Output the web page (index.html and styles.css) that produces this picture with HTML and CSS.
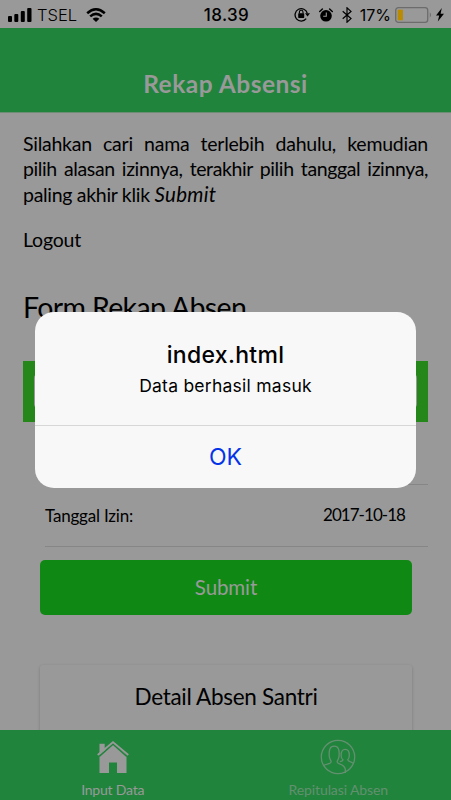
FILE: index.html
```html
<!DOCTYPE html>
<html lang="id">
<head>
<meta charset="utf-8">
<title>Rekap Absensi</title>
<link rel="stylesheet" href="styles.css">
</head>
<body>
<div class="screen">
  <div class="status">
    <div class="status-left">
      <svg class="signal" width="24" height="14" viewBox="0 0 24 14"><rect x="0" y="8" width="4" height="6" rx="1"/><rect x="6.3" y="6" width="4" height="8" rx="1"/><rect x="12.8" y="3" width="4" height="11" rx="1"/><rect x="19.2" y="0" width="4.3" height="14" rx="1"/></svg>
      <span class="carrier">TSEL</span>
      <svg class="wifi" width="20" height="14" viewBox="0 0 20 14"><path d="M1.2 5.2Q10-2.6 18.8 5.2M4.2 8.4Q10 3.4 15.8 8.4" fill="none" stroke="#000" stroke-width="2.5"/><path d="M6.6 10.8Q10 8 13.4 10.8L10 14Z"/></svg>
    </div>
    <span class="clock">18.39</span>
    <div class="status-right">
      <svg width="16" height="15" viewBox="0 0 16 15"><path d="M12.2 11.6A6.2 6.2 0 1 1 13.3 6.4" fill="none" stroke="#000" stroke-width="1.3"/><path d="M11 6.2h5l-2.4 3.2z"/><rect x="4.2" y="6.3" width="6" height="4.6" rx=".6"/><path d="M5.4 6.5V5a1.8 1.8 0 0 1 3.6 0v1.5" fill="none" stroke="#000" stroke-width="1.1"/></svg>
      <svg width="14" height="14" viewBox="0 0 14 14"><circle cx="7" cy="7.8" r="5.8"/><path d="M.7 3.6 3.4.9M13.3 3.6 10.6.9" stroke="#000" stroke-width="1.4" stroke-linecap="round"/><path d="M7.3 4.5v3.7H4.2" fill="none" stroke="#999" stroke-width="1.1"/></svg>
      <svg width="10" height="16" viewBox="0 0 10 16"><path d="M.7 4.2 9 11.6 5 15.2V.8L9 4.4.7 11.8" fill="none" stroke="#000" stroke-width="1.2"/></svg>
      <span class="percent">17%</span>
      <svg class="battery" width="37" height="16" viewBox="0 0 37 16"><rect x=".7" y=".7" width="32" height="14.6" rx="2.6" fill="none" stroke="#6c6c6c" stroke-width="1.3"/><rect x="2.7" y="2.7" width="5.2" height="10.6" fill="#ba8b00"/><path d="M34.8 5.3q2.4 2.7 0 5.4z" fill="#6c6c6c"/></svg>
      <svg width="8" height="14" viewBox="0 0 8 14"><path d="M5.8 0 0 7.6h3.2L1.8 13.5 8 5.7H4.6z"/></svg>
    </div>
  </div>
  <header class="navbar"><h1>Rekap Absensi</h1></header>
  <main class="content">
    <p class="intro"><span class="line l1">Silahkan cari nama terlebih dahulu, kemudian</span> <span class="line l2">pilih alasan izinnya, terakhir pilih tanggal izinnya,</span> <span class="l3">paling akhir klik <em>Submit</em></span></p>
    <a class="logout">Logout</a>
    <h2 class="form-title">Form Rekap Absen</h2>
    <div class="searchbar"><div class="field"></div></div>
    <div class="row reason"></div>
    <div class="row date"><span class="label">Tanggal Izin:</span><span class="value">2017-10-18</span></div>
    <button class="submit"><span>Submit</span></button>
    <section class="card"><h3>Detail Absen Santri</h3></section>
  </main>
  <nav class="tabs">
    <a class="tab active">
      <svg width="32" height="34" viewBox="0 0 32 34"><path d="M2.500 14.200V2.800h5.200v6.300L16 2l13.500 12v18H20V21.500h-8V32H2.500z"/><path d="M2.200 15.400 16 3.300l13.800 12.100" fill="none" stroke="#20843d" stroke-width="1.500"/><path d="M.7 14 16 1.200 31.300 14" fill="none" stroke="#999" stroke-width="1.700"/></svg>
      <span>Input Data</span>
    </a>
    <a class="tab">
      <svg width="36" height="36" viewBox="0 0 36 36" fill="none" stroke="#63906f" stroke-width="1.3"><circle cx="18" cy="18" r="16.7"/><path d="M3.8 26.500c2.200-1.700 6.900-1.200 7.300-3.500.3-1.500-1.700-2.400-1.900-6.400-.3-5.900.8-9.400 5-9.400s5.300 3.500 4.900 9.400c-.2 4-2.100 4.900-1.900 6.400.4 2.700 7.100 1.400 8.100 7.100l.1 4"/><path d="M19.800 22.700c1.600-.2 3-.9 3.200-2-1.300-.8-1.900-2.100-1.900-4.200 0-4 1.300-6.100 4.100-6.100s4.200 2.100 4.100 6.100c0 2.100-.6 3.400-1.600 4.200.3 2.300 3.700 1.300 5.500 3.700"/></svg>
      <span>Repitulasi Absen</span>
    </a>
  </nav>
  <div class="overlay">
    <div class="alert">
      <div class="alert-body"><div class="alert-title">index.html</div><div class="alert-text">Data berhasil masuk</div></div>
      <div class="alert-ok">OK</div>
    </div>
  </div>
</div>
</body>
</html>
```
FILE: styles.css
```css
* { box-sizing: border-box; }
body { margin: 0; font-family: Lato, sans-serif; color: #000; background: #999; }
h1, h2, h3, p { margin: 0; font-weight: 400; }
svg { display: block; flex: none; }
.screen { position: relative; width: 451px; height: 800px; overflow: hidden; display: flex; flex-direction: column; }
.status { height: 28px; flex: none; display: grid; grid-template-columns: 1fr auto 1fr; align-items: center; padding: 0 7px 0 8px; font: 17px/28px Inter, sans-serif; }
.status-left, .status-right { display: flex; align-items: center; }
.carrier { margin: 0 9px 0 5px; font-size: 16.5px; font-weight: 300; }
.clock { font-weight: 500; letter-spacing: .4px; padding: 1px 0 0 1px; }
.status-right { justify-content: flex-end; gap: 9px; }
.status-right .percent { margin-left: -1px; font-size: 16px; margin-right: -5px; }
.battery { margin-right: -5px; }
.navbar { height: 85px; flex: none; background: #20843d; border-bottom: 1px solid #6d8d74; padding-top: 41px; text-align: center; color: #999; }
.navbar h1 { font-size: 24.5px; line-height: 30px; font-weight: 700; letter-spacing: .5px; }
.content { flex: 1; min-height: 0; overflow: hidden; padding: 18px 23px 0; }
.intro { font-size: 19.5px; line-height: 25.3px; letter-spacing: -.25px; }
.line { display: block; white-space: nowrap; text-align: justify; text-align-last: justify; }
.l2 { letter-spacing: -.38px; }
.l3 { letter-spacing: -.3px; }
.l3 em { font-size: 20.5px; line-height: 1; letter-spacing: .3px; }
.logout { display: block; margin-top: 20px; font-size: 19.5px; line-height: 25px; letter-spacing: -.2px; }
.form-title { margin-top: 36px; font-size: 28.5px; line-height: 38px; letter-spacing: -.65px; white-space: nowrap; }
.searchbar { margin-top: 35px; height: 61px; background: #25861a; padding: 12px 11px; }
.field { height: 36px; background: #999; border-radius: 5px; }
.row { margin-left: 22px; height: 62px; border-bottom: 1px solid #868686; display: flex; justify-content: space-between; align-items: center; padding-right: 23px; font-size: 17px; }
.row.reason { height: 63px; }
.label { letter-spacing: -.2px; }
.value { font-size: 17px; letter-spacing: -.95px; padding-bottom: 2px; }
.submit { display: block; width: 372px; height: 55px; margin: 13px 0 0 17px; padding: 0; border: 0; border-radius: 5px; background: #0f8914; color: #999; font: 20.5px/55px Lato, sans-serif; letter-spacing: -.1px; }
.card { width: 372px; height: 90px; margin: 50px 0 0 17px; padding-top: 16px; border-radius: 3px; text-align: center; box-shadow: 0 1px 3px #00000038; }
.card h3 { font-size: 22.5px; line-height: 32px; letter-spacing: -.3px; }
.tabs { height: 70px; flex: none; display: grid; grid-template-columns: 1fr 1fr; background: #20843d; }
.tab { display: flex; flex-direction: column; align-items: center; color: #63906f; font-size: 14px; line-height: 18px; padding-top: 9px; letter-spacing: -.1px; }
.tab span { margin-top: 6px; }
.tab.active { color: #999; fill: #999; padding-top: 11px; letter-spacing: -.2px; }
.overlay { position: absolute; inset: 0; display: flex; align-items: flex-start; justify-content: center; padding-top: 312px; }
.alert { width: 381px; height: 176px; border-radius: 19px; background: #f8f8f8; text-align: center; font-family: Inter, sans-serif; }
.alert-body { height: 114px; border-bottom: 1px solid #d7d7d7; padding-top: 29px; }
.alert-title { font-size: 23px; line-height: 29px; font-weight: 500; letter-spacing: .3px; }
.alert-text { font-size: 17.5px; line-height: 31px; letter-spacing: .25px; }
.alert-ok { font-size: 23px; line-height: 63px; color: #0433e8; }
```
